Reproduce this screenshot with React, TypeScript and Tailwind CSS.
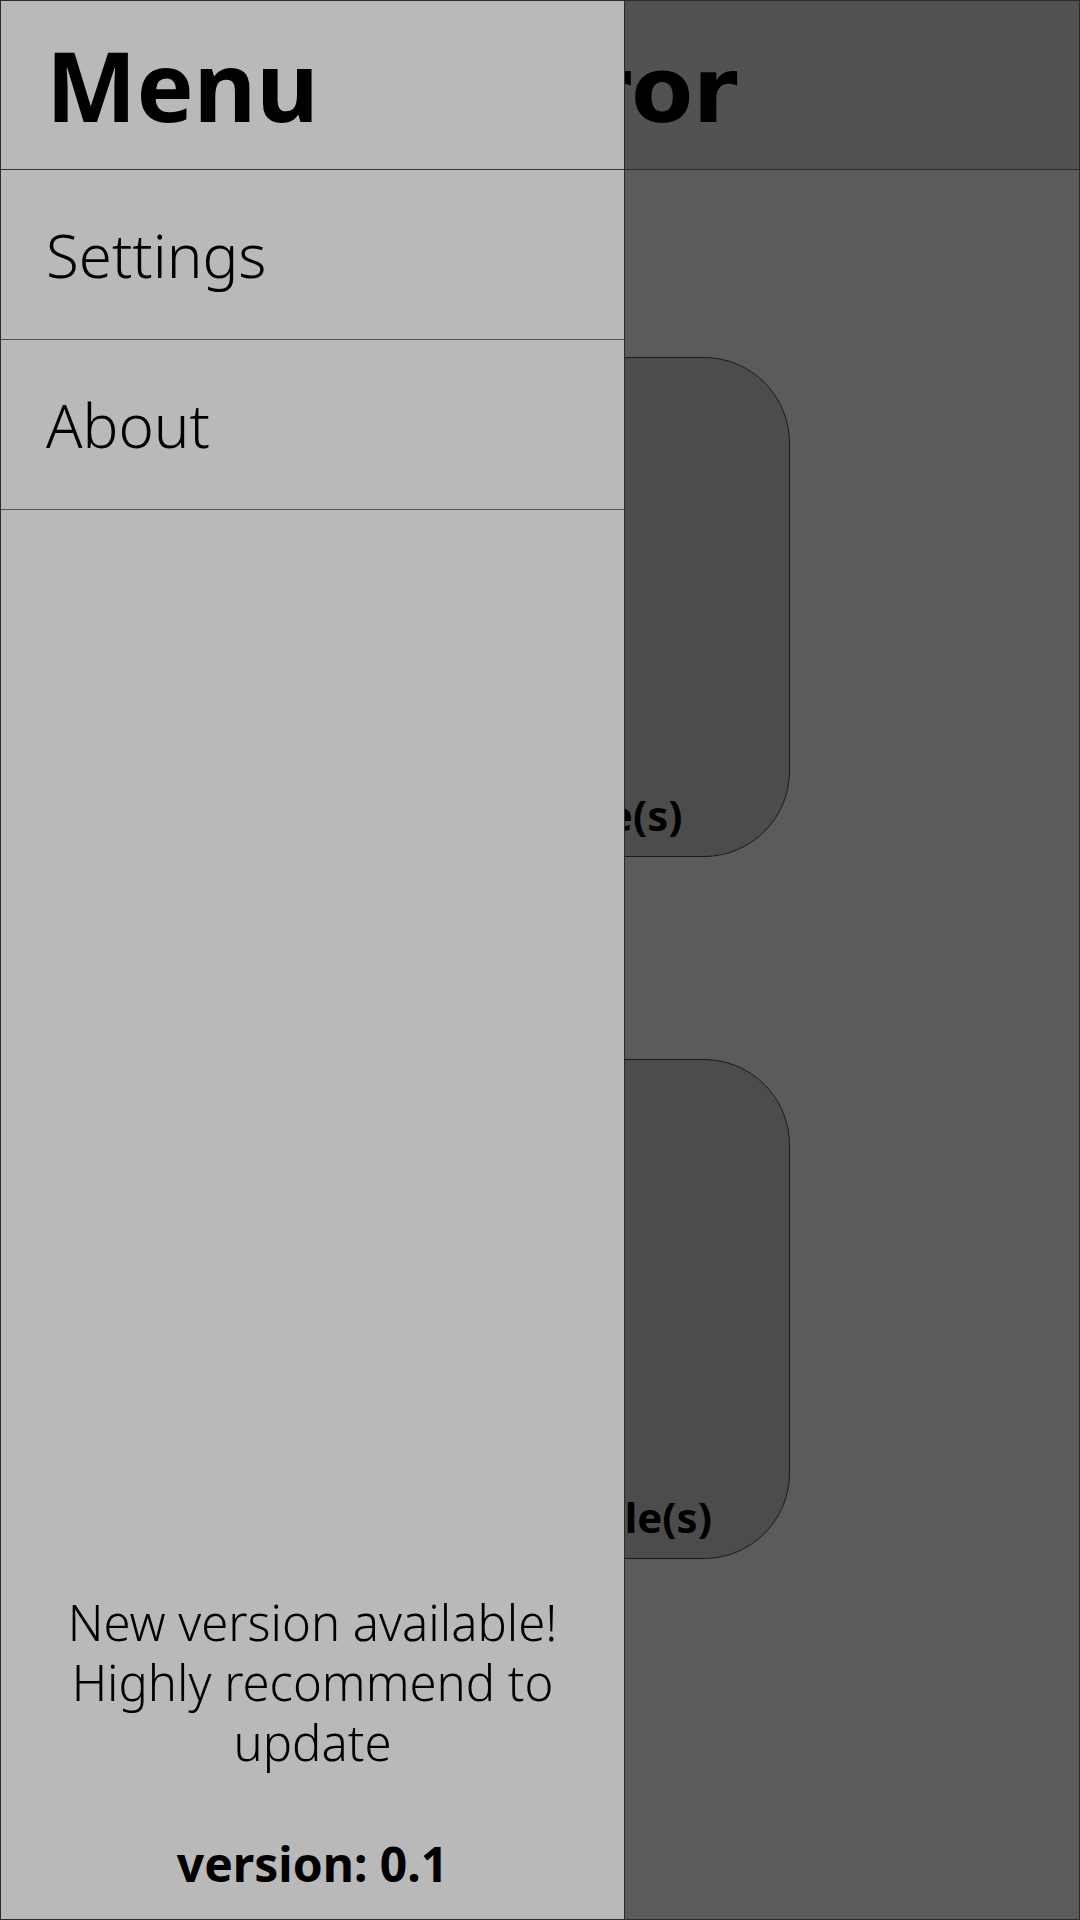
export default function App() {
  const items = ['Settings', 'About'];
  const cards = ['Send file(s)', 'Receive file(s)'];

  return (
    <div className="relative w-[1080px] h-[1920px] overflow-hidden border border-[#2b2b2b] bg-[#5b5b5b] font-['DejaVu_Sans',sans-serif]">
      {/* App header (behind the drawer) */}
      <div className="h-[169px] flex items-center pt-[12px] pl-[41px] bg-[#525252] border-b border-[#2b2b2b]">
        <h1 className="text-[90px] leading-none font-bold text-black whitespace-nowrap">Screen Mirror</h1>
      </div>

      {/* Cards */}
      <div className="flex flex-col items-center pt-[187px] gap-[202px]">
        {cards.map((label) => (
          <div
            key={label}
            className="w-[500px] h-[500px] rounded-[86px] bg-[#4c4c4c] border border-[#1a1a1a] flex flex-col justify-end items-center pl-[56px] pb-[20px]"
          >
            <span className="font-['Noto_Sans',sans-serif] text-[42px] leading-none font-bold text-black whitespace-nowrap">
              {label}
            </span>
          </div>
        ))}
      </div>

      {/* Drawer */}
      <div className="absolute left-0 top-0 h-full w-[624px] bg-[#b9b9b9] border-r border-[#2b2b2b] flex flex-col font-['Noto_Sans',sans-serif] text-black">
        <div className="h-[169px] flex items-center pl-[45px] border-b border-[#333333]">
          <span className="text-[96px] leading-none font-bold">Menu</span>
        </div>
        {items.map((item) => (
          <div key={item} className="h-[170px] flex items-center pl-[45px] border-b border-[#555555]">
            <span className="text-[60px] leading-none font-light">{item}</span>
          </div>
        ))}
        <div className="mt-auto pb-[25px] text-center text-[49px] leading-[60px] font-light">
          <p>
            New version available!
            <br />
            Highly recommend to
            <br />
            update
          </p>
          <p className="mt-[62px] text-[48px] font-bold">version: 0.1</p>
        </div>
      </div>
    </div>
  );
}
